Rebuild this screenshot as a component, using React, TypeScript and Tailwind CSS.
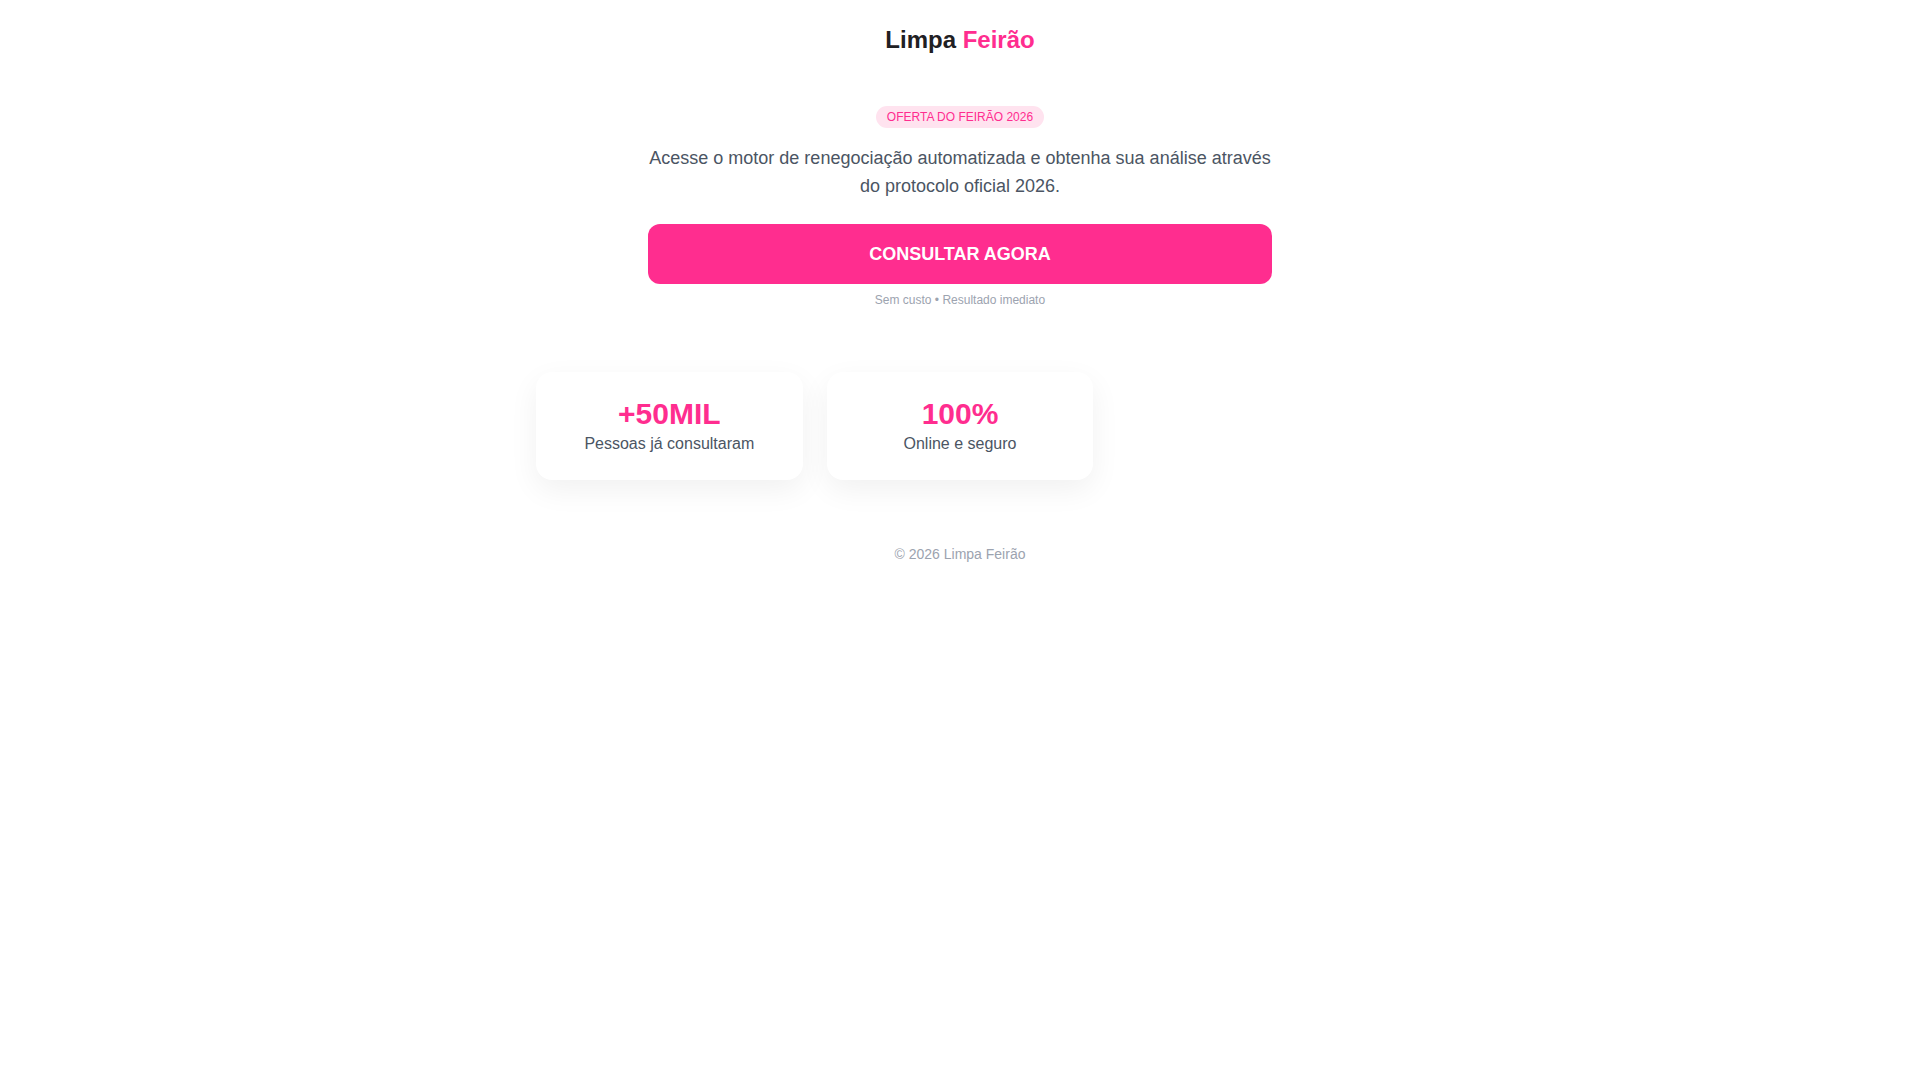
export default function App() {
  return (
    <div className="min-h-screen bg-white font-['Liberation_Sans',Arial,sans-serif] text-center">
      {/* Cabeçalho */}
      <header className="pt-6 pb-[50px]">
        <h1 className="text-2xl font-bold text-[#1f2023]">
          Limpa <span className="text-[#ff2d8f]">Feirão</span>
        </h1>
      </header>

      {/* Hero */}
      <section className="mx-auto w-[624px] flex flex-col items-center">
        <span className="rounded-full bg-[#ffe3ef] px-[11px] py-[3px] text-xs text-[#ff2d8f]">
          OFERTA DO FEIRÃO 2026
        </span>
        <p className="mt-4 text-lg text-[#4b5563]">
          Acesse o motor de renegociação automatizada e obtenha sua análise através do protocolo oficial 2026.
        </p>
        <button className="mt-6 w-full rounded-xl bg-[#ff2d8f] py-4 text-lg font-bold text-white">
          CONSULTAR AGORA
        </button>
        <p className="mt-2 text-xs text-[#9ca3af]">Sem custo • Resultado imediato</p>
      </section>

      {/* Números */}
      <section className="mx-auto mt-16 w-[848px] grid grid-cols-3 gap-6">
        <div className="rounded-2xl bg-white p-6 shadow-[0_10px_30px_rgba(0,0,0,0.06)]">
          <div className="text-3xl font-bold text-[#ff2d8f]">+50MIL</div>
          <div className="text-base text-[#4b5563]">Pessoas já consultaram</div>
        </div>
        <div className="rounded-2xl bg-white p-6 shadow-[0_10px_30px_rgba(0,0,0,0.06)]">
          <div className="text-3xl font-bold text-[#ff2d8f]">100%</div>
          <div className="text-base text-[#4b5563]">Online e seguro</div>
        </div>
      </section>

      <footer className="mt-16 text-sm text-[#9ca3af]">© 2026 Limpa Feirão</footer>
    </div>
  )
}
